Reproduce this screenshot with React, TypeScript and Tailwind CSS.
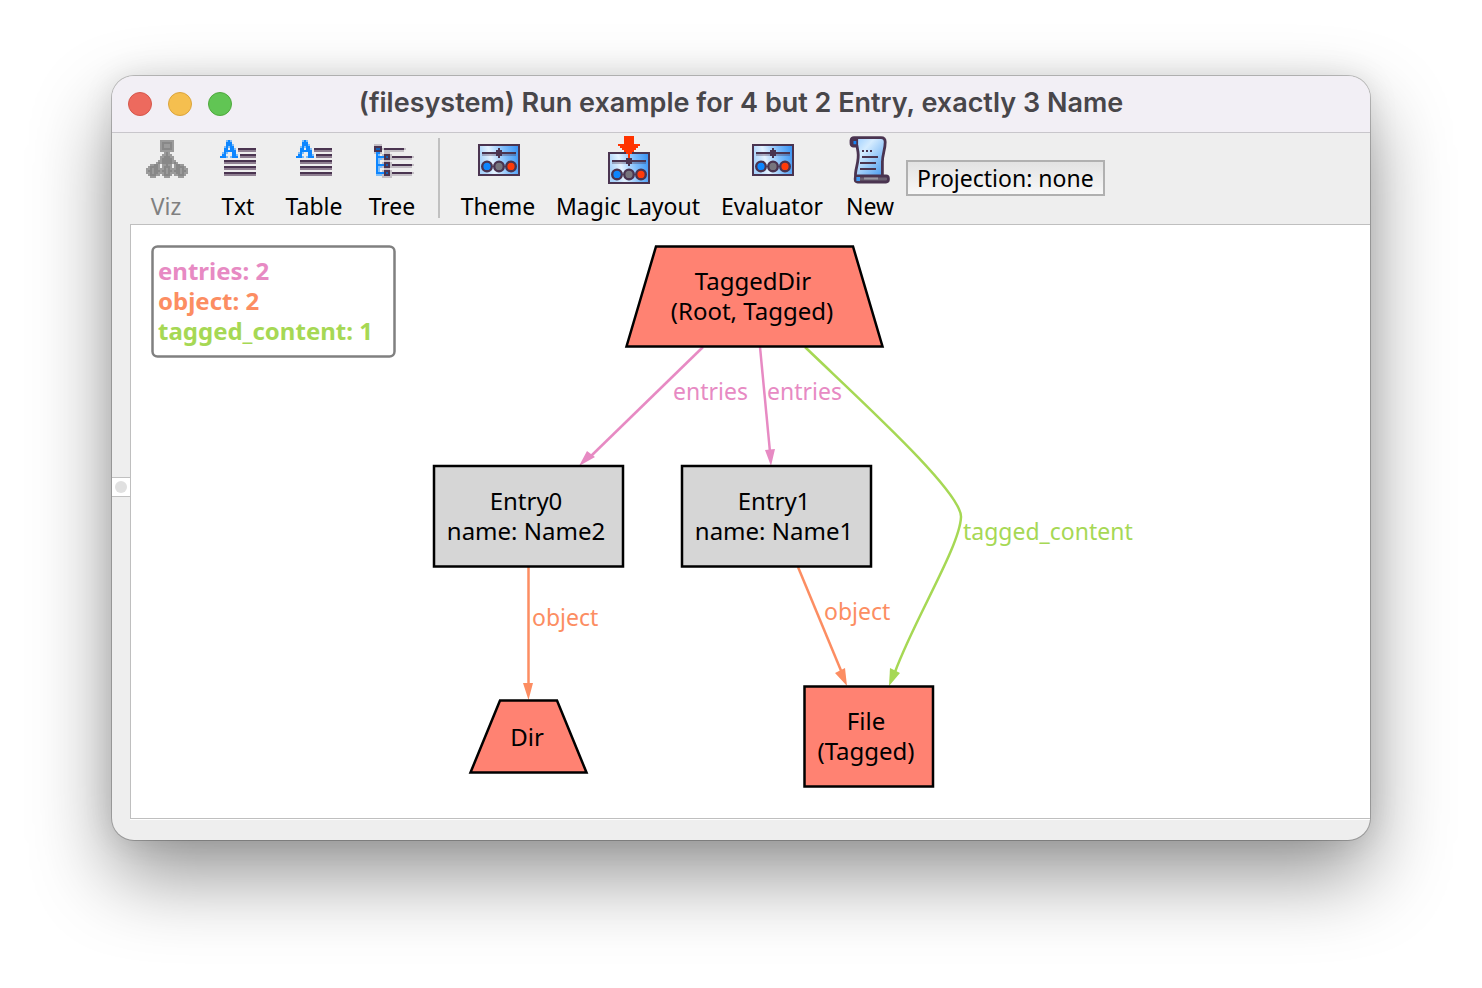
import React from "react";

const INK = "#4a3450";

const PALETTE: Record<string, string> = {
  g: "#9b9b9b",
  d: "#888888",
  b: "#0d86ff",
  l: "#7fbdf8",
  k: "#4a3450",
  s: "#8f7f91",
  w: "#c4bfc5",
  n: "#1460b4",
};

const VIZ = [
  ".......ggggggg.......",
  ".......gdddddg.......",
  ".......gdgggdg.......",
  ".......gdgggdg.......",
  ".......gdddddg.......",
  ".......ggggggg.......",
  ".........gdg.........",
  "........ggdgg........",
  ".......ggdddgg.......",
  ".......gdddddg.......",
  "......ggdddddgg......",
  ".....gdgdddddgdg.....",
  "..ggddg.ggdgg.gddgg..",
  ".gddddg.gdddg.gddddg.",
  "ggdgddgggdgdgggddgdgg",
  "gddgdddgddgddgdddgddg",
  "ggdgddgggdgdgggddgdgg",
  ".gdddgg.gdddg.ggdddg.",
  "..ggg....ggg....ggg..",
];

const LINES = [
  "...lbl............",
  "...bbb............",
  "...bbbl...........",
  "..lblbb...........",
  "..bb.bbl.kkkkkkkkk",
  "..bbbbbb.sssssssss",
  ".lbl..bb..........",
  ".bb...bbl.kkkkkkkk",
  "bbbl.lbbb.ssssssss",
  "..................",
  "..kkkkkkkkkkkkkkkk",
  "..ssssssssssssssss",
  "..................",
  "..kkkkkkkkkkkkkkkk",
  "..ssssssssssssssss",
  "..................",
  "..kkkkkkkkkkkkkkkk",
  "..ssssssssssssssss",
];

const TREE = [
  "wwww................",
  "kkkk................",
  "knnkwkkkkkkkkkkw....",
  "kkkk.wwwwwwwwww.....",
  "wbbw.www............",
  ".bl.wkkkw...........",
  ".bbbbknkwkkkkkkkkkkw",
  ".bllwkkkwwwwwwwwwww.",
  ".bl..www............",
  ".bl.wkkkw...........",
  ".bbbbknkwkkkkkkkkkkw",
  ".bllwkkkwwwwwwwwwww.",
  ".bl..www............",
  ".bl.wkkkw...........",
  ".bbbbknkwkkkkkkkkkkw",
  ".lllwkkkwwwwwwwwwww.",
  "....wwwww...........",
];

function Icon({ children, label }: { children: React.ReactNode; label: string }) {
  return (
    <svg viewBox="0 0 24 25" className="h-[50px] w-12" aria-label={label} role="img">
      {children}
    </svg>
  );
}

function Pixels({ rows, x, y }: { rows: string[]; x: number; y: number }) {
  return (
    <g shapeRendering="crispEdges">
      {rows.flatMap((row, r) =>
        [...row].map((c, i) =>
          c === "." ? null : <rect key={`${r}-${i}`} x={x + i} y={y + r} width="1" height="1" fill={PALETTE[c]} />
        )
      )}
    </g>
  );
}

function PanelShapes() {
  return (
    <g>
      <path fill="url(#panel)" d="M2 5h21v16H2z" />
      <path fill={INK} d="M2 5h21v16H2z M3 6v14h19V6z" fillRule="evenodd" shapeRendering="crispEdges" />
      <path fill={INK} fillOpacity="0.35" d="M4 10h17v1H4z" />
      <path fill={INK} d="M4 9h17v1H4z M11 8h3v3h-3z M12 7h1v5h-1z" />
      <g stroke={INK} strokeWidth="1.200">
        <circle cx="6.500" cy="16.200" r="2.400" fill="#0d86ff" />
        <circle cx="12.500" cy="16.200" r="2.400" fill="#77757d" />
        <circle cx="18.500" cy="16.200" r="2.400" fill="#ff3b0a" />
      </g>
    </g>
  );
}

function PanelIcon({ label }: { label: string }) {
  return (
    <Icon label={label}>
      <PanelShapes />
    </Icon>
  );
}

function MagicIcon() {
  return (
    <Icon label="Magic layout">
      <g transform="translate(0 4)">
        <PanelShapes />
      </g>
      <path
        shapeRendering="crispEdges"
        fill="#ff3300"
        d="M10 1h5v4h3v1h-1v1h-1v1h-1v1h-1v1h-1v2h-1v-2h-1V9h-1V8H9V7H8V6H7V5h3z"
      />
    </Icon>
  );
}

function ScrollIcon() {
  return (
    <Icon label="New instance">
      <path
        fill="url(#paper)"
        stroke={INK}
        strokeWidth="1.400"
        strokeLinejoin="round"
        d="M4 1.800H17.500Q19.600 1.800 19.600 4C19.600 8 18.200 10 18.200 14V21.500H4.800C4.200 18 6.800 14 6 9L5.500 6H3.500Q2.500 6 2.500 4.500V3.200Q2.700 1.800 4 1.800Z"
      />
      <path fill="#1684f5" stroke={INK} strokeWidth="0.900" d="M3.300 3H5.600V5.600H3.300Z" />
      <rect x="4.600" y="21" width="16.600" height="3" rx="1.200" fill="#6a6070" stroke={INK} strokeWidth="1.400" />
      <rect x="5.200" y="21.500" width="1.800" height="2" fill="#3f9bf5" />
      <path fill="#9a98a2" d="M9 21.800h7v0.900H9z" />
      <path fill={INK} d="M8 8h1v1h-1z M10 8h1v1h-1z M12 8h1v1h-1z M8 11h8v1H8z M7 14h8v1H7z M7 17h8v1H7z" />
    </Icon>
  );
}

function Tool({ label, children, width, disabled }: { label: string; children: React.ReactNode; width: string; disabled?: boolean }) {
  return (
    <button
      disabled={disabled}
      className={`flex shrink-0 flex-col items-center gap-1.5 whitespace-nowrap text-[23px] leading-8 text-black disabled:text-[#808080] ${width}`}
    >
      {children}
      <span>{label}</span>
    </button>
  );
}

function Graph() {
  return (
    <svg viewBox="131 225 1239 593" className="h-[593px] w-full" role="img" aria-label="Instance graph">
      <rect x="152.500" y="246.500" width="242" height="110" rx="5" fill="#fff" stroke="#808080" strokeWidth="2.500" />
      <g fontSize="24" fontWeight="700">
        <text x="158" y="280" fill="#e78ac3">entries: 2</text>
        <text x="158" y="310" fill="#fc8d62">object: 2</text>
        <text x="158" y="340" fill="#a6d854">tagged_content: 1</text>
      </g>
      <g fill="none" strokeWidth="2.500">
        <path stroke="#e78ac3" d="M703 347L590 457" />
        <path stroke="#e78ac3" d="M760 347L770 452" />
        <path stroke="#a6d854" d="M805 347C860 400 962 492 961 517C960 546 914 620 895 672" />
        <path stroke="#fc8d62" d="M528.500 567V685" />
        <path stroke="#fc8d62" d="M798 567L842 673" />
      </g>
      <path fill="#e78ac3" d="M579 466L587 451L595 457Z M771 466L765 450L775 449Z" />
      <path fill="#a6d854" d="M889 686L890 668L900 673Z" />
      <path fill="#fc8d62" d="M528.500 700L523 683H533Z M847 686L835 673L845 668Z" />
      <g stroke="#000" strokeWidth="2.500">
        <path fill="#ff8272" d="M656 246.500H853L882.500 346.500H626.500Z" />
        <path fill="#d6d6d6" d="M434 466H623V566.500H434Z" />
        <path fill="#d6d6d6" d="M682 466H871V566.500H682Z" />
        <path fill="#ff8272" d="M500 700.500H557L586.500 772.500H470.500Z" />
        <path fill="#ff8272" d="M804.500 686.500H933V786.500H804.500Z" />
      </g>
      <g fontSize="24" textAnchor="middle" fill="#000">
        <text x="753" y="290">TaggedDir</text>
        <text x="752" y="320">(Root, Tagged)</text>
        <text x="526" y="510">Entry0</text>
        <text x="526" y="540">name: Name2</text>
        <text x="774" y="510">Entry1</text>
        <text x="774" y="540">name: Name1</text>
        <text x="527" y="746">Dir</text>
        <text x="866" y="730">File</text>
        <text x="866" y="760">(Tagged)</text>
      </g>
      <g fontSize="23">
        <text x="673" y="400" fill="#e78ac3">entries</text>
        <text x="767" y="400" fill="#e78ac3">entries</text>
        <text x="963" y="540" fill="#a6d854">tagged_content</text>
        <text x="532" y="626" fill="#fc8d62">object</text>
        <text x="824" y="620" fill="#fc8d62">object</text>
      </g>
    </svg>
  );
}

export default function App() {
  return (
    <main className="min-h-screen bg-white px-28 pt-[76px] pb-[148px] font-['Noto_Sans',sans-serif]">
      <svg className="absolute size-0" aria-hidden="true">
        <defs>
          <linearGradient id="panel" x1="0" y1="0.200" x2="1" y2="0">
            <stop offset="0" stopColor="#a9d3fb" />
            <stop offset="0.250" stopColor="#e4f2ff" />
            <stop offset="0.600" stopColor="#7dbcfb" />
            <stop offset="1" stopColor="#2b8bf2" />
          </linearGradient>
          <linearGradient id="paper" x1="0" y1="0" x2="1" y2="1">
            <stop offset="0" stopColor="#8cc6ff" />
            <stop offset="0.350" stopColor="#d5ecff" />
            <stop offset="1" stopColor="#3d94ee" />
          </linearGradient>
        </defs>
      </svg>
      <section className="overflow-hidden rounded-[22px] bg-[#eeeeee] shadow-[0_0_0_1px_rgba(0,0,0,0.22),0_36px_80px_rgba(0,0,0,0.42),0_0_30px_rgba(0,0,0,0.1)]">
        <header className="grid h-[57px] grid-cols-[120px_1fr_120px] items-center border-b border-[#c8c6cb] bg-[#f2eff5]">
          <div className="flex gap-4 pl-4">
            <button aria-label="Close" className="size-6 rounded-full border border-[#d5574b] bg-[#ed6a5e]" />
            <button aria-label="Minimize" className="size-6 rounded-full border border-[#dba43c] bg-[#f5bf4f]" />
            <button aria-label="Zoom" className="size-6 rounded-full border border-[#4fa83d] bg-[#61c554]" />
          </div>
          <h1 className="whitespace-nowrap pb-0.5 text-center font-['Inter',sans-serif] text-[27px] leading-8 font-semibold text-[#48464a]">
            (filesystem) Run example for 4 but 2 Entry, exactly 3 Name
          </h1>
        </header>
        <div className="flex">
          <aside className="flex w-[18px] shrink-0 flex-col justify-center">
            <button aria-label="Toggle sidebar" className="flex h-5 items-center justify-center border-y border-[#c0c0c0] bg-white">
              <span className="size-3 rounded-full bg-[#e0e0e0]" />
            </button>
          </aside>
          <div className="min-w-0 flex-1">
            <div className="flex h-[91px] pt-px">
              <Tool label="Viz" width="w-[72px]" disabled>
                <Icon label="Graph view"><Pixels rows={VIZ} x={2} y={3} /></Icon>
              </Tool>
              <Tool label="Txt" width="w-[72px]">
                <Icon label="Text view"><Pixels rows={LINES} x={3} y={3} /></Icon>
              </Tool>
              <Tool label="Table" width="w-[80px]">
                <Icon label="Table view"><Pixels rows={LINES} x={3} y={3} /></Icon>
              </Tool>
              <Tool label="Tree" width="w-[76px]">
                <Icon label="Tree view"><Pixels rows={TREE} x={3} y={5} /></Icon>
              </Tool>
              <div className="mx-2 mt-1 mb-1.5 w-0.5 bg-[#c0c0c0]" />
              <Tool label="Theme" width="w-[100px]"><PanelIcon label="Theme" /></Tool>
              <Tool label="Magic Layout" width="w-[160px]"><MagicIcon /></Tool>
              <Tool label="Evaluator" width="w-[128px]"><PanelIcon label="Evaluator" /></Tool>
              <Tool label="New" width="w-[68px]"><ScrollIcon /></Tool>
              <button className="mt-[26px] ml-0.5 flex h-9 items-center whitespace-nowrap border-2 border-[#b0b0b0] bg-linear-to-b from-[#e2e2e2] to-[#f8f8f8] px-[9px] text-[23px] leading-8 text-black">
                Projection: none
              </button>
            </div>
            <div className="border-y border-l border-[#bfbfbf] bg-white">
              <Graph />
            </div>
            <div className="h-[21px] border-t border-white" />
          </div>
        </div>
      </section>
    </main>
  );
}
